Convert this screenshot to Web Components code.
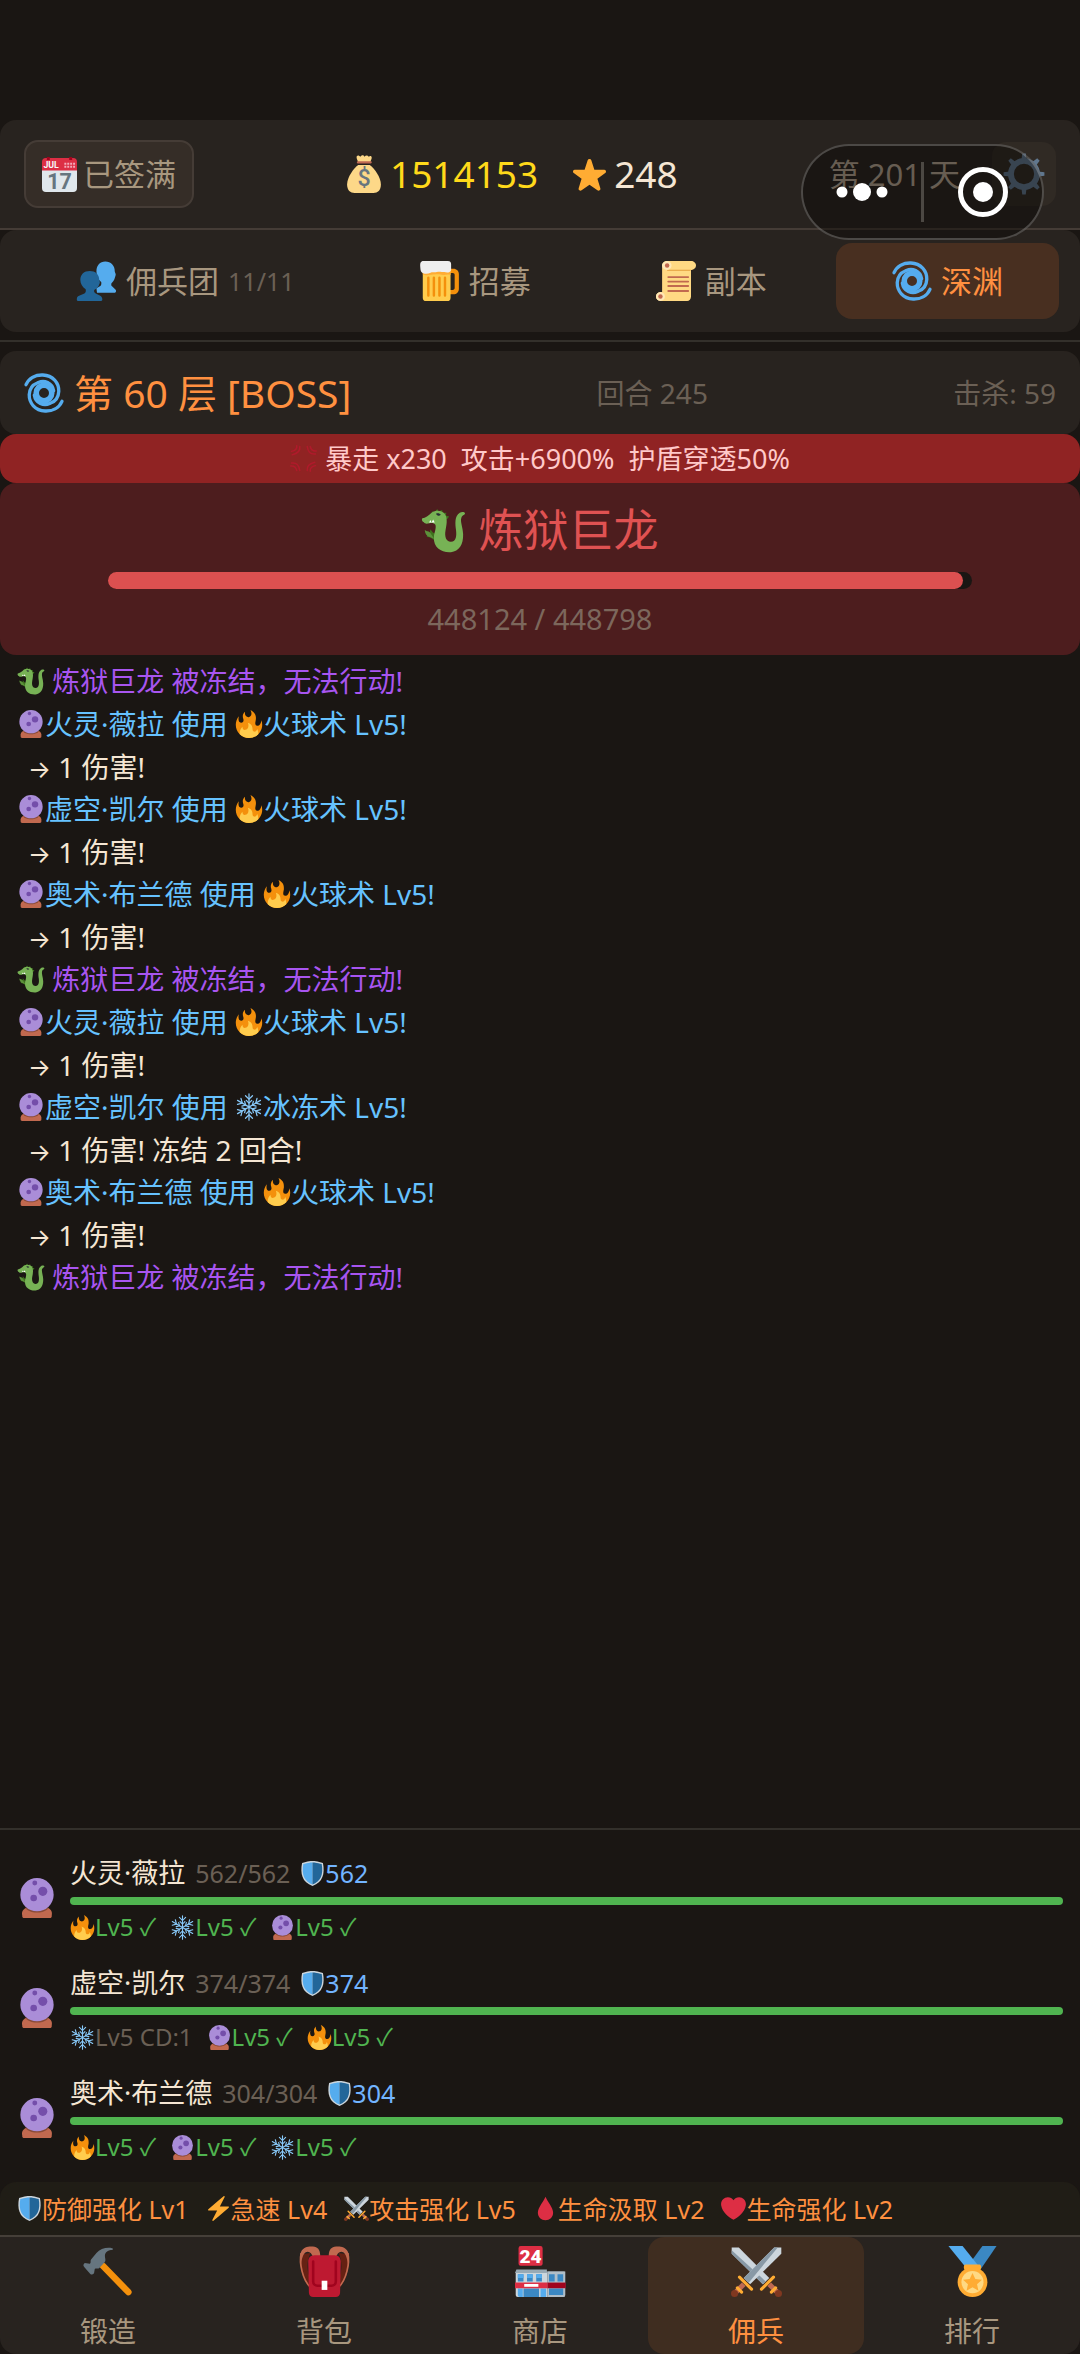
<!DOCTYPE html>
<html lang="zh-CN">
<head>
<meta charset="utf-8">
<meta name="viewport" content="width=device-width, initial-scale=1">
<title>佣兵 · 深渊</title>
<style>
  html { background: #1a1613; }
  body {
    margin: 0;
    color: #f5e6d3;
    font: 28px/36px "Noto Sans", "Inter", "Noto Sans CJK SC", sans-serif;
  }
</style>
</head>
<body>
<game-app>
  <status-bar slot="top" coins="1514153" stars="248" day="201"></status-bar>
  <tab-bar slot="top">
    <tab-item icon="people" count="11/11">佣兵团</tab-item>
    <tab-item icon="beer">招募</tab-item>
    <tab-item icon="scroll">副本</tab-item>
    <tab-item icon="cyclone" active>深渊</tab-item>
  </tab-bar>
  <floor-header slot="top" floor="60" round="245" kills="59"></floor-header>
  <rage-banner slot="top">暴走 x230&nbsp; 攻击+6900%&nbsp; 护盾穿透50%</rage-banner>
  <boss-card slot="top" name="炼狱巨龙" hp="448124" max="448798" fill="99"></boss-card>

  <log-line kind="boss"><game-icon name="dragon"></game-icon> 炼狱巨龙 被冻结，无法行动!</log-line>
  <log-line kind="skill"><game-icon name="orb"></game-icon>火灵·薇拉 使用 <game-icon name="fire"></game-icon>火球术 Lv5!</log-line>
  <log-line kind="hit"><span>→</span> 1 伤害!</log-line>
  <log-line kind="skill"><game-icon name="orb"></game-icon>虚空·凯尔 使用 <game-icon name="fire"></game-icon>火球术 Lv5!</log-line>
  <log-line kind="hit"><span>→</span> 1 伤害!</log-line>
  <log-line kind="skill"><game-icon name="orb"></game-icon>奥术·布兰德 使用 <game-icon name="fire"></game-icon>火球术 Lv5!</log-line>
  <log-line kind="hit"><span>→</span> 1 伤害!</log-line>
  <log-line kind="boss"><game-icon name="dragon"></game-icon> 炼狱巨龙 被冻结，无法行动!</log-line>
  <log-line kind="skill"><game-icon name="orb"></game-icon>火灵·薇拉 使用 <game-icon name="fire"></game-icon>火球术 Lv5!</log-line>
  <log-line kind="hit"><span>→</span> 1 伤害!</log-line>
  <log-line kind="skill"><game-icon name="orb"></game-icon>虚空·凯尔 使用 <game-icon name="snow"></game-icon>冰冻术 Lv5!</log-line>
  <log-line kind="hit"><span>→</span> 1 伤害! 冻结 2 回合!</log-line>
  <log-line kind="skill"><game-icon name="orb"></game-icon>奥术·布兰德 使用 <game-icon name="fire"></game-icon>火球术 Lv5!</log-line>
  <log-line kind="hit"><span>→</span> 1 伤害!</log-line>
  <log-line kind="boss"><game-icon name="dragon"></game-icon> 炼狱巨龙 被冻结，无法行动!</log-line>

  <ally-card slot="party" name="火灵·薇拉" hp="562">
    <skill-chip icon="fire">Lv5 ✓</skill-chip>
    <skill-chip icon="snow">Lv5 ✓</skill-chip>
    <skill-chip icon="orb">Lv5 ✓</skill-chip>
  </ally-card>
  <ally-card slot="party" name="虚空·凯尔" hp="374">
    <skill-chip icon="snow" cooling>Lv5 CD:1</skill-chip>
    <skill-chip icon="orb">Lv5 ✓</skill-chip>
    <skill-chip icon="fire">Lv5 ✓</skill-chip>
  </ally-card>
  <ally-card slot="party" name="奥术·布兰德" hp="304">
    <skill-chip icon="fire">Lv5 ✓</skill-chip>
    <skill-chip icon="orb">Lv5 ✓</skill-chip>
    <skill-chip icon="snow">Lv5 ✓</skill-chip>
  </ally-card>

  <buff-bar slot="bottom">
    <buff-item icon="shield">防御强化 Lv1</buff-item>
    <buff-item icon="bolt">急速 Lv4</buff-item>
    <buff-item icon="swords">攻击强化 Lv5</buff-item>
    <buff-item icon="blood">生命汲取 Lv2</buff-item>
    <buff-item icon="heart">生命强化 Lv2</buff-item>
  </buff-bar>
  <bottom-nav slot="bottom">
    <nav-item icon="hammer">锻造</nav-item>
    <nav-item icon="backpack">背包</nav-item>
    <nav-item icon="store">商店</nav-item>
    <nav-item icon="swords" active>佣兵</nav-item>
    <nav-item icon="medal">排行</nav-item>
  </bottom-nav>
  <capsule-menu slot="overlay"></capsule-menu>
</game-app>

<script>
const ICONS = {
  star: `<path fill="#FFAC33" d="M27.287 34.627c-.404 0-.806-.124-1.152-.371L18 28.422l-8.135 5.834a1.97 1.97 0 0 1-2.312-.008a1.971 1.971 0 0 1-.721-2.194l3.034-9.792l-8.062-5.681a1.98 1.98 0 0 1-.708-2.203a1.978 1.978 0 0 1 1.866-1.363L12.947 13l3.179-9.549a1.976 1.976 0 0 1 3.749 0L23 13l10.036.015a1.975 1.975 0 0 1 1.159 3.566l-8.062 5.681l3.034 9.792a1.97 1.97 0 0 1-.72 2.194a1.957 1.957 0 0 1-1.16.379z"/>`,
  heart: `<path fill="#DD2E44" d="M35.885 11.833c0-5.45-4.418-9.868-9.867-9.868-3.308 0-6.227 1.633-8.018 4.129-1.791-2.496-4.71-4.129-8.017-4.129-5.45 0-9.868 4.417-9.868 9.868 0 .772.098 1.52.266 2.241C1.751 22.587 11.216 31.568 18 34.034c6.783-2.466 16.249-11.447 17.617-19.959.17-.721.268-1.469.268-2.242z"/>`,
  bolt: `<path fill="#FFAC33" d="M32.938 15.651C32.792 15.26 32.418 15 32 15H19.925L26.89 1.458c.219-.426.106-.947-.271-1.243C26.437.071 26.218 0 26 0c-.233 0-.466.082-.653.243L18 6.588 3.347 19.243c-.316.273-.43.714-.284 1.105S3.582 21 4 21h12.075L9.11 34.542c-.219.426-.106.947.271 1.243.182.144.401.215.619.215.233 0 .466-.082.653-.243L18 29.412l14.653-12.655c.317-.273.43-.714.285-1.106z"/>`,
  blood: `<path fill="#DD2E44" d="M18 1.2C16 7 7 16.500 7 24.200C7 30.600 12 35 18 35s11-4.400 11-10.800C29 16.500 20 7 18 1.200z"/>`,
  fire: `<path fill="#F4900C" d="M35 19c0-2.062-.367-4.039-1.04-5.868-.46 5.389-3.333 8.157-6.335 6.868-2.812-1.208-.917-5.917-.777-8.164.236-3.809-.012-8.169-6.931-11.794 2.875 5.5.333 8.917-2.333 9.125-2.958.231-5.667-2.542-4.667-7.042-3.238 2.386-3.332 6.402-2.333 9 1.042 2.708-.042 4.958-2.583 5.208-2.84.28-4.418-3.041-2.963-8.333C2.52 10.965 1 14.805 1 19c0 9.389 7.611 17 17 17s17-7.611 17-17z"/><path fill="#FFCC4D" d="M28.394 23.999c.148 3.084-2.561 4.293-4.019 3.709-2.106-.843-1.541-2.291-2.083-5.291s-2.625-5.083-5.708-6c2.25 6.333-1.247 8.667-3.08 9.084-1.872.426-3.753-.001-3.968-4.007C7.352 23.668 6 26.676 6 30c0 .368.023.73.055 1.09C9.125 34.124 13.342 36 18 36s8.875-1.876 11.945-4.91c.032-.36.055-.722.055-1.09 0-2.187-.584-4.236-1.606-6.001z"/>`,
  orb: `<path fill="#C1694F" d="M8 27h20c2.500 1 4 3.500 3.300 6.500.3 2-.8 2.500-1.800 2.500h-23c-1 0-2.100-.5-1.800-2.500C4 30.500 5.500 28 8 27z"/><path fill="#8A4B38" d="M9 28.500c5 3.500 13 3.500 18 0l1.500-2h-21z"/><circle cx="18" cy="15" r="15" fill="#AA8DD8"/><circle cx="23.200" cy="12" r="4.100" fill="#744EAA"/><circle cx="15" cy="18" r="3" fill="#744EAA"/><circle cx="16" cy="4.500" r="2.200" fill="#744EAA"/>`,
  snow: `<g fill="none" stroke="#88C9F9" stroke-width="1.600" stroke-linecap="round"><path d="M18 1v34M3.300 9.500l29.400 17M3.300 26.500l29.400-17"/><path d="M13.500 3.500L18 8l4.500-4.500M14.500 9.500l3.500 3.500 3.500-3.500M13.500 32.500L18 28l4.500 4.500M14.500 26.500l3.500-3.500 3.500 3.500"/><path transform="rotate(60 18 18)" d="M13.500 3.500L18 8l4.500-4.500M14.500 9.500l3.500 3.500 3.500-3.500M13.500 32.500L18 28l4.500 4.500M14.500 26.500l3.500-3.500 3.500 3.500"/><path transform="rotate(120 18 18)" d="M13.500 3.500L18 8l4.500-4.500M14.500 9.500l3.500 3.500 3.500-3.500M13.500 32.500L18 28l4.500 4.500M14.500 26.500l3.500-3.500 3.500 3.500"/></g>`,
  shield: `<path fill="#CCD6DD" d="M33 3c-7-3-15-3-15-3S10 0 3 3C0 18 3 31 18 36c15-5 18-18 15-33z"/><path fill="#55ACEE" d="M18 33.884C6.412 29.729 1.961 19.831 4.760 4.444 11.063 2.029 17.928 2 18 2z"/><path fill="#226699" d="M31.240 4.445C25.027 2.056 18.144 1.999 18.071 1.999L18 2v31.884c11.588-4.154 16.040-14.052 13.240-29.439z"/>`,
  cyclone: `<g fill="none" stroke="#55ACEE" stroke-linecap="round"><circle cx="18" cy="18" r="7" stroke-width="5"/><path stroke-width="3" d="M1.800 10.500C4.500 4.500 10.500 1.500 17 1.800 26 2.200 31.500 9 31.300 16.500 31 22 28 25.500 24 27"/><path stroke-width="3" d="M34.200 25.500C31.500 31.500 25.500 34.500 19 34.200 10 33.800 4.500 27 4.700 19.500 5 14 8 10.500 12 9"/><path stroke-width="3" d="M13 8.500c5-2.500 12.500 0 13.700 7.500M23 27.500c-5 2.500-12.500 0-13.700-7.500"/></g>`,
  dragon: `<path fill="#3E721D" d="M7 5.500l2.500-3.200 1 1.700L13 .8l1 2 3-1.300.3 2.500 3-.2-.5 2.200 2.700.8-1.500 2zM3.500 19l3.500 1 .5-3 2 2.500L12 21l-1 5-3.500-2.500-3-.5 1.500-1.800z"/><path fill="#77B255" d="M1 8.200C3.500 8 6 6 8.500 3.800 12 1.500 17 1.700 19.300 5.200c2.200 3.500 1.100 8.500.3 12.800-.9 5 .6 9.200 4.400 9 4.200-.2 4.600-4.700 4-9.500-.6-4.800-1.300-11 3-13.700 1.500-.9 4-.7 4.200.4.200 1.300-2.200 1.500-2.900 3.500-1.100 3.200 1.200 7.500 1.400 13.300.3 8-3.300 13.800-9.700 14.300-7.500.6-14-3.500-13.700-11.500.1-4 2.200-7.500 1.200-10.300-.8-1.500-3-1.800-4.700-1.300-2 .5-3.500.7-4.500-.7C1.200 11 .2 9.800 1 8.200z"/><path fill="#5C913B" d="M3 17.500c2 1.500 3 .5 4.500 2.500l3 4.500-4-1.500c-2-.5-3.300-2.500-3.500-5.500z"/><path fill="#FFF" d="M6.500 11.500l1-2 1 2 1.200-2.300 1.300 2.300z"/><path fill="#292F33" d="M12 4.500c1.500-.7 3-.3 3.800.8-1 1.200-2.700 1.200-3.800-.8z"/>`,
  anger: `<g fill="none" stroke="#B01A2B" stroke-width="2" stroke-linecap="round" stroke-linejoin="round"><path d="M13 2c1 6-2 9-10 11M9 1c.5 4-1.500 6.500-7 7.500M34 12c-7 1-10-3-11-10M35 8c-5 .5-7-1.500-8-6M23 34c-1-6 2-9 10-11M27 35c-.5-4 1.500-6.500 7-7.500M2 24c7-1 10 3 11 10M1 28c5-.5 7 1.500 8 6"/></g>`,
  calendar: `<path fill="#E0E7EC" d="M36 32a4 4 0 0 1-4 4H4a4 4 0 0 1-4-4V9h36z"/><path fill="#DD2E44" d="M0 14V5a4 4 0 0 1 4-4h28a4 4 0 0 1 4 4v9z"/><path fill="#A0041E" d="M5 0h3v3H5zM28 0h3v3h-3z"/><text x="1.500" y="11.500" font-family="Roboto" font-weight="700" font-size="9" fill="#F5F8FA">JUL</text><g fill="#F4ABBA"><path d="M23 6h2v2h-2zM26 6h2v2h-2zM29 6h2v2h-2zM32 6h2v2h-2zM23 9h2v2h-2zM26 9h2v2h-2zM29 9h2v2h-2zM32 9h2v2h-2z"/></g><text x="18" y="32.500" text-anchor="middle" font-family="Roboto" font-weight="700" font-size="22" fill="#66757F">17</text>`,
  coinbag: `<path fill="#FDD888" d="M12.500 9.500h11C28 13 34 21 34 28c0 5.500-3 8-7 8H9c-4 0-7-2.500-7-8 0-7 6-15 10.500-18.500z"/><path fill="#FDD888" d="M11 1.500c1-1.800 2.500-1 3.500.2 1-2 3.500-2 4 0 1-1.600 3-1.600 4 0 1-1 2.500-1 2.800.5C25.500 4 24 5.500 24 7.500H12.500C12.500 5.500 10.500 3.500 11 1.500z"/><path fill="#BF6952" d="M12 6h12.500c1 0 1.300 2 0 2H12c-1.200 0-1-2 0-2z"/><text x="18" y="29.500" text-anchor="middle" font-family="Roboto" font-weight="500" font-size="22" fill="#67757F">$</text>`,
  people: `<path fill="#55ACEE" d="M35 26c.500 2-.300 2.500-2 2.500H18l-.5-4 3.500-2c1-.6 1-2 .8-3.500-2.500-2-4.300-5-4.300-9.500C17.500 4 20.500.5 25.500.5S34 4 34 9.500c.2 1.500 1.300 2 .7 3.500-.5 1.500-1 5-3.700 7-.3 1.500-.2 2.500.8 3z"/><path fill="#226699" d="M22.500 33c.8 2.500 0 3-2 3H2c-2 0-2.500-.5-2-3 .5-2 5-2.800 7-4 1.200-.8 1-2.300.8-3.500C5 23.500 3 20.500 3 17c0-5 3.500-8 8.500-8s8.500 3 8.500 8c.8 1.500.7 3 0 4-.5 2-2 4-4.500 5-.2 1.200-.2 2.200 1 3 2 1.200 5.500 2 6 4z"/>`,
  beer: `<path fill="#F4900C" d="M27 7h3c3 0 5 2 5 5v13c0 3-2 5-5 5h-3v-4h2.500c1 0 1.700-.7 1.700-1.700V12.500c0-1-.7-1.700-1.700-1.700H27z"/><path fill="#FFCC4D" d="M2.500 8h25v25a3 3 0 0 1-3 3h-19a3 3 0 0 1-3-3z"/><path stroke="#F4900C" stroke-width="2.200" stroke-linecap="round" d="M7.500 15v16M12.500 15v16M17.500 15v16M22.500 15v16"/><path fill="#FFAC33" d="M2.500 8h25v4.500c-3-.8-4 .5-8-.2s-8-.3-11 .2-5 .5-6-.500z"/><path fill="#EEEEEE" d="M3 0h22c2.500 0 3 1.500 3 3v5c-1 3-4 2.500-6 2-3 0-4-.8-7 0-2.500.5-3.500-.5-5.500.500-2 1-4.500 1.500-6.500.5C0 10 .5 7 .2 5 0 2 .5 0 3 0z"/>`,
  scroll: `<path fill="#FFD983" d="M32 0H10C7 0 5.500 2 5.500 4.500V28H4c-2.500 0-4 2-4 4s1.500 4 4 4h24c2 0 3.500-1.500 3.500-4V8H32c2 0 4-2 4-4s-2-4-4-4z"/><path fill="#E39F3D" d="M10 7.800h22c-1 .8-2 1-3 1H10z"/><path fill="#FFE8B6" d="M10 0c-2.500 0-4.500 2-4.500 4S7.500 8 10 8s4-2 4-4-1.500-4-4-4zM4 28c-2.500 0-4 2-4 4s1.500 4 4 4 4-2 4-4-1.500-4-4-4z"/><circle cx="10" cy="4" r="2" fill="#C1694F"/><circle cx="4" cy="32" r="2" fill="#C1694F"/><path stroke="#C1694F" stroke-width="1.600" stroke-linecap="round" d="M11 14.500h18M11 18.500h18M11 22.500h18M11 27h18"/>`,
  gear: `<circle cx="18" cy="18" r="11.200" fill="none" stroke="#66809A" stroke-width="5"/><g fill="#66809A"><path d="M15.800 6l.7-5.500h3l.7 5.500zM15.800 30l.7 5.500h3l.7-5.500zM6 15.800l-5.500.7v3l5.500.7zM30 15.800l5.500.7v3l-5.500.7z"/><path transform="rotate(45 18 18)" d="M15.800 6l.7-5.500h3l.7 5.500zM15.800 30l.7 5.500h3l.7-5.500zM6 15.800l-5.500.7v3l5.500.7zM30 15.800l5.500.7v3l-5.500.7z"/></g>`,
  hammer: `<path stroke="#F4900C" stroke-width="4.600" stroke-linecap="round" d="M14 14l18 18.500"/><path fill="#66757F" d="M20.500 1.500c-4-.800-8.500.5-11 3.500l-3.800 4.500c-.8 1 .2 2-.8 3L1.200 12c-1.200 1.200-1.200 1.800-.2 3l4 4.500c1 .9 1.700.8 2.800-.3l.5-3c1-.8 2.200.2 3.200-.7l3.800-4c1.500-1.700-.8-4 .7-6.500 1-1.800 3.500-2 4.800-2.300.6-.2.500-1-.3-1.200z"/>`,
  backpack: `<path fill="#662113" d="M1 6C0 12 2 24 8 30l3-3C5 21 5 12 8 5zM35 6c1 6-1 18-7 24l-3-3c6-6 6-15 3-22z"/><path fill="none" stroke="#C1694F" stroke-width="1.200" d="M1.500 5C0 12 2.500 24 8 29M34.500 5C36 12 33.500 24 28 29"/><path fill="#C1694F" d="M1.500 4C3.500 0 8 0 11 .5S15 4 15 7l-5 1C9 5 7 3 4.500 4.500 3 5.500 2 9 1.500 12 .5 9 .5 6 1.500 4zM34.500 4C32.500 0 28 0 25 .5S21 4 21 7l5 1c1-3 3-5 5.500-3.500 1.500 1 2.500 4.500 3 7.500 1-3 1-6 0-8z"/><path fill="#BE1931" d="M11 6.500h14c3 0 4.500 2 4.500 4.500L29 33c0 2-1.500 3-3 3H10c-1.500 0-3-1-3-3L6.500 11c0-2.500 1.500-4.500 4.500-4.500z"/><path fill="none" stroke="#A0041E" stroke-width="1.800" stroke-linecap="round" d="M10 11v14c0 2 1.500 3 3 3h10c1.500 0 3-1 3-3V11"/><path fill="#FFF" d="M16 24.500h4V31h-4z"/>`,
  store: `<path fill="#DD2E44" d="M4 0h14a1.500 1.500 0 0 1 1.500 1.500v11A1.500 1.500 0 0 1 18 14H4a1.500 1.500 0 0 1-1.500-1.500v-11A1.500 1.500 0 0 1 4 0z"/><text x="11" y="11.800" text-anchor="middle" font-family="Roboto" font-weight="900" font-size="13.500" fill="#FFF">24</text><path fill="#CCD6DD" d="M1 18h22v18H2a1.500 1.500 0 0 1-1.500-1.500V19z"/><path fill="#99AAB5" d="M1 16.500h21.500v2.500H0zM23 18h12v18H23z"/><path fill="#B0BEC8" d="M23 18h12.500v16.500a1.500 1.500 0 0 1-1.500 1.500H23z"/><path fill="#3B88C3" d="M2 20h4v5H2zM8.500 20h4v5h-4zM15 20h4v5h-4zM24 20h4v5h-4zM30 20h4v5h-4zM6 30h11v6H6zM24 30h10v4.500H24z"/><path fill="#55ACEE" d="M2 30h3.500v6H3.500A1.500 1.500 0 0 1 2 34.500zM18 30h4v6h-4zM2 20h4v2.500H2zM8.500 20h4v2.500h-4zM15 20h4v2.500h-4z"/><path fill="#DD2E44" d="M0 25.800h23v4H0z"/><path fill="#A0041E" d="M23 25.800h12.800v4H23z"/><path fill="#FFF" d="M6.500 26.800h10v2h-10z"/>`,
  swords: `<g><path fill="#CCD6DD" d="M.5 1h5L27 22.500 22.500 27 .5 5.500z"/><path fill="#8899A6" d="M.5 5.500V3L24.500 25l-2 2z"/><path stroke="#BF6952" stroke-width="3.600" d="M27 27l6 6"/><path stroke="#FFAC33" stroke-width="2.200" stroke-linecap="round" d="M30 22L21.500 30.500M31.500 29.500l-3 3"/><circle cx="33.500" cy="33.500" r="2.500" fill="#803820"/></g><g transform="matrix(-1 0 0 1 36 0)"><path fill="#CCD6DD" d="M.5 1h5L27 22.500 22.500 27 .5 5.500z"/><path fill="#8899A6" d="M5.500 1H3l20.500 25 3.500-3.500z"/><path stroke="#BF6952" stroke-width="3.600" d="M27 27l6 6"/><path stroke="#FFAC33" stroke-width="2.200" stroke-linecap="round" d="M30 22L21.500 30.500M31.500 29.500l-3 3"/><circle cx="33.500" cy="33.500" r="2.500" fill="#803820"/></g>`,
  medal: `<path fill="#3B88C3" d="M25 0h10L24 16l-7-5z"/><path fill="#55ACEE" d="M1 0h10l12 15-9 1z"/><path fill="#FFAC33" d="M13 13h10c1.500 0 1.500 4 0 4H13c-1.500 0-1.500-4 0-4z"/><circle cx="18" cy="25.500" r="10.500" fill="#FFAC33"/><circle cx="18" cy="25.500" r="7.800" fill="#FFD983"/><path fill="#FFAC33" d="M18 19l2 4.300 4.700.5-3.500 3.200 1 4.600-4.200-2.400-4.200 2.400 1-4.600-3.500-3.200 4.700-.5z"/>`
};

/* Shared base: fills an open shadow root from styles and markup. */
class Base extends HTMLElement {
  connectedCallback() {
    if (this.shadowRoot) return;
    this.attachShadow({ mode: "open" }).innerHTML =
      `<style>
        * { box-sizing: border-box; }
        :host { box-sizing: border-box; display: block; }
        button { font: inherit; color: inherit; background: none; border: 0; margin: 0; padding: 0; cursor: pointer; }
        ${this.css()}
      </style>${this.html()}`;
  }
  a(name) { return this.getAttribute(name) || ""; }
  css() { return ""; }
  html() { return "<slot></slot>"; }
}
const define = (tag, css, html = () => "<slot></slot>") =>
  customElements.define(tag, class extends Base {
    css() { return css; }
    html() { return html(this); }
  });

define("game-icon", `
  :host { display: inline-block; width: var(--size, 1em); height: var(--size, 1em); vertical-align: -0.12em; flex: none; line-height: 0; }
  svg { display: block; width: 100%; height: 100%; overflow: visible; }`,
  e => `<svg viewBox="0 0 36 36" aria-hidden="true">${ICONS[e.a("name")]}</svg>`);

define("game-app", `
  :host { display: flex; flex-direction: column; min-height: 100vh; padding-top: 120px; }
  .log { flex: 1; padding: 5px 17px; }
  .party { display: flex; flex-direction: column; gap: 20px; margin: 0; padding: 25px 17px 17px; border-top: 2px solid #33302b; }`,
  () => `<slot name="top"></slot>
    <main class="log"><slot></slot></main>
    <section class="party"><slot name="party"></slot></section>
    <slot name="bottom"></slot><slot name="overlay"></slot>`);

define("status-bar", `
  :host { display: flex; justify-content: space-between; align-items: center; height: 110px; padding: 0 24px; background: #28231f; border-radius: 16px 16px 0 0; border-bottom: 2px solid #453c36; }
  .sign { display: flex; align-items: center; gap: 6px; height: 68px; padding: 0 16px; font-size: 31px; color: #a8977f; background: #352d27; border: 2px solid #453c36; border-radius: 14px; }
  .money { display: flex; align-items: center; gap: 34px; font-size: 37px; }
  .money span { display: flex; align-items: center; gap: 7px; }
  .coins { color: #ffd91a; --size: 38px; }
  .stars { --size: 35px; }
  .right { display: flex; align-items: center; gap: 32px; font-size: 31px; color: #b5a592; }
  .set { display: grid; place-items: center; width: 64px; height: 64px; background: #302a24; border-radius: 14px; --size: 42px; }
  .set game-icon { opacity: .9; }`,
  e => `<button class="sign"><game-icon name="calendar" style="--size:35px"></game-icon>已签满</button>
    <div class="money"><span class="coins"><game-icon name="coinbag"></game-icon>${e.a("coins")}</span>
    <span class="stars"><game-icon name="star"></game-icon>${e.a("stars")}</span></div>
    <div class="right"><span>第 ${e.a("day")} 天</span><button class="set" aria-label="设置"><game-icon name="gear"></game-icon></button></div>`);

define("tab-bar", `
  :host { display: flex; gap: 13px; height: 102px; padding: 13px 21px; background: #28231f; border-radius: 16px; }`);

define("tab-item", `
  :host { display: flex; flex: 1 1 auto; color: #a8977f; font-size: 31px; }
  :host([active]) { color: #ff9040; }
  button { flex: 1; display: flex; align-items: center; justify-content: center; gap: 9px; border-radius: 16px; --size: 40px; }
  :host([active]) button { background: #482f20; }
  small { font-size: 25px; color: #6b6055; }`,
  e => `<button><game-icon name="${e.a("icon")}"></game-icon><slot></slot>${e.a("count") ? `<small>${e.a("count")}</small>` : ""}</button>`);

define("floor-header", `
  :host { margin-top: 8px; border-top: 2px solid #33302b; padding-top: 9px; }
  header { display: flex; align-items: center; justify-content: space-between; height: 83px; padding: 0 24px; background: #28231f; border-radius: 16px; color: #6b6055; }
  h1 { display: flex; align-items: center; gap: 10px; margin: 0; font-size: 39px; font-weight: 400; color: #ff9040; --size: 40px; }`,
  e => `<header><h1><game-icon name="cyclone"></game-icon>第 ${e.a("floor")} 层 [BOSS]</h1><span>回合 ${e.a("round")}</span><span>击杀: ${e.a("kills")}</span></header>`);

define("rage-banner", `
  :host { display: flex; align-items: center; justify-content: center; gap: 8px; height: 49px; background: #902323; border-radius: 16px; color: #ffc9c9; font-size: 27px; }`,
  () => `<game-icon name="anger"></game-icon><span><slot></slot></span>`);

define("boss-card", `
  :host { display: flex; flex-direction: column; align-items: center; height: 172px; padding-top: 19px; background: #4d1d1e; border-radius: 16px; }
  h2 { display: flex; align-items: center; gap: 12px; margin: 0; font-size: 45px; line-height: 56px; font-weight: 400; color: #e05252; }
  .track { width: 80%; height: 17px; margin: 14px 0 12px; background: #1a1613; border-radius: 9px; }
  .fill { height: 100%; background: #dc5050; border-radius: 9px; }
  .hp { font-size: 29px; color: #7c675c; }`,
  e => `<h2><game-icon name="dragon"></game-icon>${e.a("name")}</h2>
    <div class="track" role="progressbar" aria-label="${e.a("name")}" aria-valuenow="${e.a("hp")}" aria-valuemax="${e.a("max")}"><div class="fill" style="width:${e.a("fill")}%"></div></div>
    <span class="hp">${e.a("hp")} / ${e.a("max")}</span>`);

define("log-line", `
  :host { line-height: 43px; }
  :host([kind=boss]) { color: #a855f0; }
  :host([kind=skill]) { color: #66c2ff; }
  :host([kind=hit]) { line-height: 42px; padding-left: 11px; }
  ::slotted(span) { font-size: 24px; line-height: 0; }`);

define("ally-card", `
  :host { display: flex; align-items: flex-start; gap: 13px; }
  .avatar { --size: 40px; margin-top: 23px; }
  .body { flex: 1; min-width: 0; }
  .head { display: flex; align-items: center; gap: 10px; font-size: 27px; }
  .hp, .sh { font-size: 25px; }
  .hp { color: #6b6055; }
  .sh { display: flex; align-items: center; color: #72b4ff; }
  .bar { height: 8px; margin: 6px 0 4px; background: #50b450; border-radius: 4px; }
  .skills { display: flex; gap: 14px; }`,
  e => `<game-icon class="avatar" name="orb"></game-icon>
    <div class="body"><div class="head"><span>${e.a("name")}</span><span class="hp">${e.a("hp")}/${e.a("hp")}</span><span class="sh"><game-icon name="shield"></game-icon>${e.a("hp")}</span></div>
    <div class="bar" role="progressbar" aria-label="${e.a("name")}" aria-valuenow="${e.a("hp")}" aria-valuemax="${e.a("hp")}"></div>
    <div class="skills"><slot></slot></div></div>`);

define("skill-chip", `
  :host { display: flex; align-items: center; font-family: "Noto Sans", "Noto Sans CJK SC", sans-serif; font-size: 24px; color: #50b450; --size: 25px; }
  :host([cooling]) { color: #6b6055; }`,
  e => `<game-icon name="${e.a("icon")}"></game-icon><span><slot></slot></span>`);

define("buff-bar", `
  :host { display: flex; align-items: center; gap: 17px; height: 53px; padding: 0 17px; background: #201d16; border-radius: 16px 16px 0 0; color: #ff9040; font-size: 25px; }`);

define("buff-item", `
  :host { display: flex; align-items: center; white-space: nowrap; --size: 25px; }`,
  e => `<game-icon name="${e.a("icon")}"></game-icon><span><slot></slot></span>`);

define("bottom-nav", `
  nav { display: flex; height: 119px; border-top: 2px solid #453f38; background: #28231f; border-radius: 0 0 16px 16px; }`,
  () => `<nav><slot></slot></nav>`);

define("nav-item", `
  :host { flex: 1; display: flex; color: #a8977f; }
  :host([active]) { color: #ff9040; }
  button { flex: 1; display: flex; flex-direction: column; align-items: center; gap: 16px; padding-top: 9px; border-radius: 16px; --size: 51px; }
  :host([active]) button { background: #3f2d20; }`,
  e => `<button><game-icon name="${e.a("icon")}"></game-icon><slot></slot></button>`);

/* Floating host-app capsule: sits over the status bar in the top right corner. */
define("capsule-menu", `
  :host { position: absolute; top: 144px; right: 36px; display: flex; align-items: center; width: 243px; height: 96px; background: rgba(8, 6, 4, .45); border: 2px solid rgba(255, 255, 255, .22); border-radius: 48px; }
  button { flex: 1; display: grid; place-items: center; height: 92px; }
  i { width: 3px; height: 60px; background: #4c4843; }
  svg { display: block; }`,
  () => `<button aria-label="更多"><svg width="52" height="52" viewBox="0 0 52 52" fill="#fff"><circle cx="6" cy="26" r="5.500"/><circle cx="26" cy="26" r="9"/><circle cx="46" cy="26" r="5.500"/></svg></button>
    <i></i>
    <button aria-label="关闭"><svg width="50" height="50" viewBox="0 0 50 50"><circle cx="25" cy="25" r="22.500" fill="none" stroke="#fff" stroke-width="5"/><circle cx="25" cy="25" r="10" fill="#fff"/></svg></button>`);
</script>
</body>
</html>
